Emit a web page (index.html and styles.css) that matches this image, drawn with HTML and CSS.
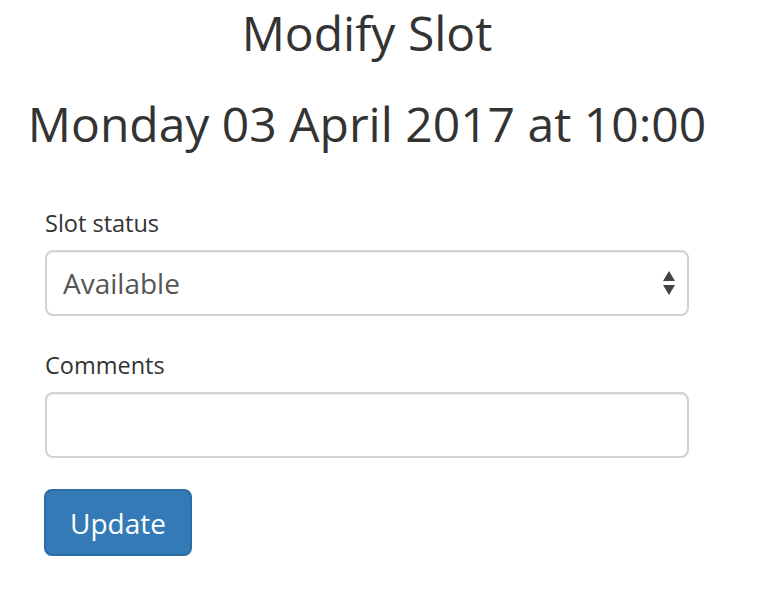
FILE: index.html
```html
<!DOCTYPE html>
<html lang="en">
<head>
<meta charset="UTF-8" />
<meta name="viewport" content="width=device-width, initial-scale=1" />
<title>Modify Slot</title>
<link rel="stylesheet" href="styles.css">
</head>
<body>

<div class="container">
  <h1 class="page-title">Modify Slot</h1>
  <h2 class="slot-time">Monday 03 April 2017 at 10:00</h2>

  <form class="slot-form">
    <div class="form-group">
      <label for="slot-status">Slot status</label>
      <div class="select-wrap">
        <select id="slot-status" class="form-control">
          <option>Available</option>
          <option>Booked</option>
          <option>Unavailable</option>
        </select>
        <svg class="select-arrows" width="12" height="24" viewBox="0 0 12 24">
          <path d="M6 0 L12 10 L0 10 Z" fill="#444" />
          <path d="M0 14 L12 14 L6 24 Z" fill="#444" />
        </svg>
      </div>
    </div>

    <div class="form-group">
      <label for="comments">Comments</label>
      <input type="text" id="comments" class="form-control" />
    </div>

    <button type="submit" class="btn-update">Update</button>
  </form>
</div>

</body>
</html>
```

FILE: styles.css
```css
body { margin: 0; font-family: "Open Sans", "Noto Sans", sans-serif; color: #333; background: #fff; }
.container { width: 644px; margin-left: 45px; }
.page-title {
  margin: 0; font-size: 48px; line-height: 66px; font-weight: 400; text-align: center;
}
.slot-time {
  margin: 25px -40px 0; font-size: 48px; line-height: 66px; font-weight: 400; text-align: center;
}
.slot-form { margin-top: 51px; }
.form-group { margin-bottom: 34px; }
.form-group label { display: block; font-size: 23.5px; line-height: 30px; margin-bottom: 12px; }
.select-wrap { position: relative; }
.form-control {
  display: block; box-sizing: border-box; width: 100%; height: 66px; padding: 0 16px;
  font-family: inherit; font-size: 28px; color: #555; background: #fff;
  border: 2px solid #d2d2d2; border-radius: 8px;
  box-shadow: inset 0 1px 1px rgba(0,0,0,0.075); outline: none;
}
select.form-control { appearance: none; -webkit-appearance: none; }
.select-arrows { position: absolute; right: 14px; top: 21px; pointer-events: none; }
.slot-form .form-group:last-of-type { margin-bottom: 31px; }
.btn-update {
  display: block; width: 148px; height: 67px; padding: 0; margin-left: -1px;
  font-family: inherit; font-size: 28px; color: #fff;
  background: #337ab7; border: 2px solid #2e6da4; border-radius: 8px; cursor: pointer;
}
.btn-update:hover { background: #286090; }
```
